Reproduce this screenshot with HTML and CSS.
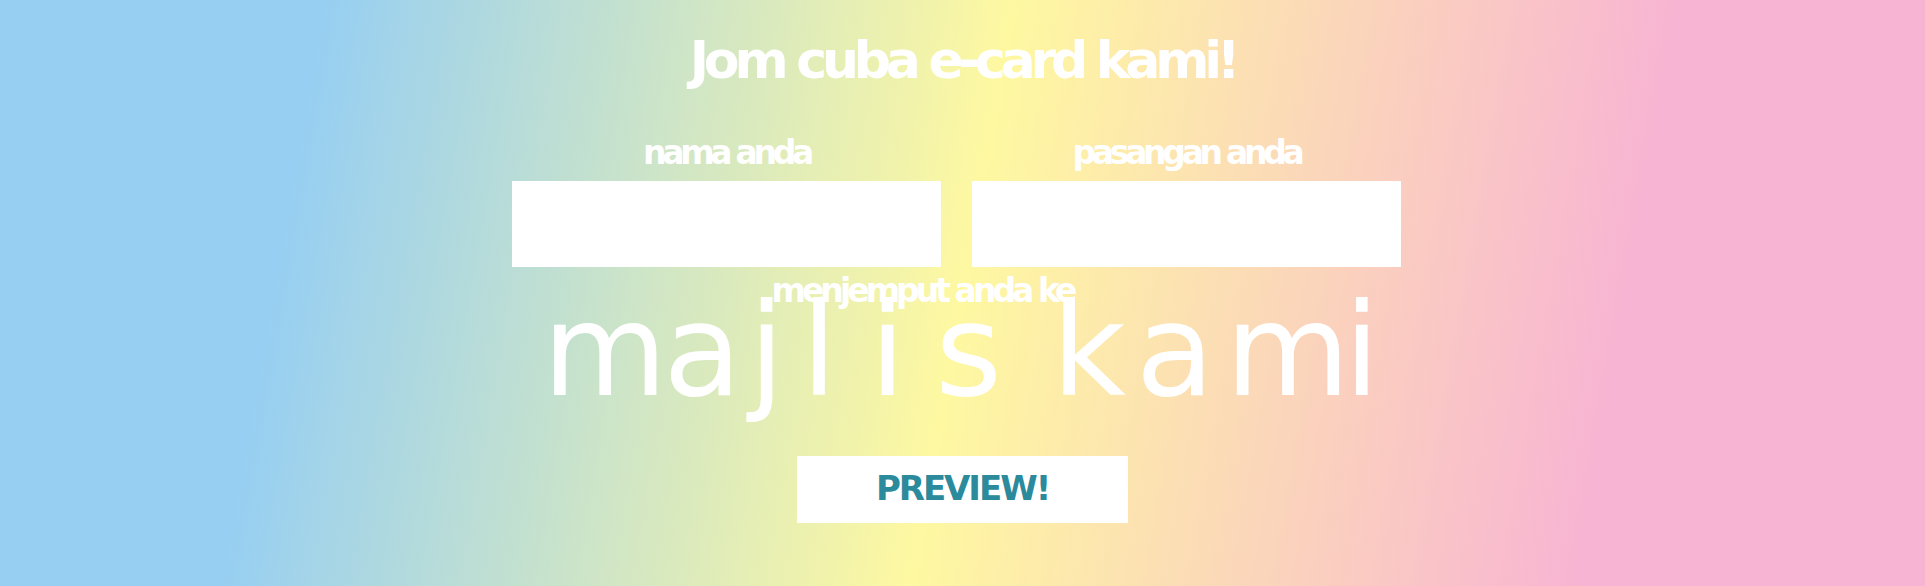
FILE: index.html
```html
<!DOCTYPE html>
<html lang="ms">
<head>
<meta charset="utf-8">
<title>Jom cuba e-card kami!</title>
<link rel="stylesheet" href="styles.css">
</head>
<body>
<main class="hero">
  <h1 class="title">Jom cuba e-card kami!</h1>
  <form class="card-form">
    <div class="fields">
      <div class="field">
        <label class="field-label" for="nama">nama anda</label>
        <input class="field-input" id="nama" type="text">
      </div>
      <div class="field">
        <label class="field-label" for="pasangan">pasangan anda</label>
        <input class="field-input" id="pasangan" type="text">
      </div>
    </div>
    <p class="invite">menjemput anda ke</p>
    <p class="venue"><span>m</span><span>a</span><span>j</span><span>l</span><span>i</span><span>s</span> <span>k</span><span>a</span><span>m</span><span>i</span></p>
    <button class="preview" type="button">PREVIEW!</button>
  </form>
</main>
</body>
</html>
```
FILE: styles.css
```css
html, body {
  margin: 0;
  padding: 0;
  height: 100%;
}
body {
  background: linear-gradient(100deg, #97cff2 16%, #fef8a1 50%, #f8b4d3 83%);
  font-family: "DejaVu Sans", sans-serif;
  color: #ffffff;
  overflow: hidden;
}
.hero {
  display: flex;
  flex-direction: column;
  align-items: center;
  padding-top: 34px;
}
.title {
  margin: 0;
  font-size: 52px;
  line-height: 52px;
  font-weight: bold;
  letter-spacing: -0.1em;
}
.card-form {
  display: flex;
  flex-direction: column;
  align-items: center;
  width: 100%;
}
.fields {
  display: flex;
  justify-content: center;
  gap: 31px;
  margin-top: 50px;
  margin-right: 12px;
}
.field {
  display: flex;
  flex-direction: column;
  align-items: center;
  gap: 12px;
}
.field-label {
  font-size: 33px;
  line-height: 33px;
  font-weight: bold;
  letter-spacing: -0.13em;
}
.field-input {
  width: 429px;
  height: 86px;
  box-sizing: border-box;
  border: none;
  background: #ffffff;
  margin: 0;
  padding: 0 12px;
  font-family: "DejaVu Sans", sans-serif;
  font-size: 24px;
}
.invite {
  margin: 11px 80px 0 0;
  font-size: 33px;
  line-height: 26px;
  font-weight: bold;
  letter-spacing: -0.12em;
  position: relative;
  z-index: 1;
  white-space: nowrap;
}
.venue {
  margin: 2px 3px 0 0;
  font-size: 128px;
  line-height: 90px;
  letter-spacing: 0;
  font-weight: normal;
  white-space: nowrap;
}
.venue span:nth-child(1) { margin-right: -4px; }
.venue span:nth-child(2) { margin-right: 7px; }
.venue span:nth-child(3) { margin-right: 17px; }
.venue span:nth-child(4) { margin-right: 33px; }
.venue span:nth-child(5) { margin-right: 30px; }
.venue span:nth-child(6) { margin-right: 9px; }
.venue span:nth-child(7) { margin-right: 10px; }
.venue span:nth-child(8) { margin-right: 11px; }
.venue span:nth-child(9) { margin-right: -6px; }
.preview {
  margin-top: 60px;
  width: 331px;
  height: 67px;
  border: none;
  background: #ffffff;
  color: #2b8a9b;
  font-family: "DejaVu Sans", sans-serif;
  font-size: 34px;
  font-weight: bold;
  letter-spacing: -0.06em;
  padding: 0 0 4px 0;
}
```
